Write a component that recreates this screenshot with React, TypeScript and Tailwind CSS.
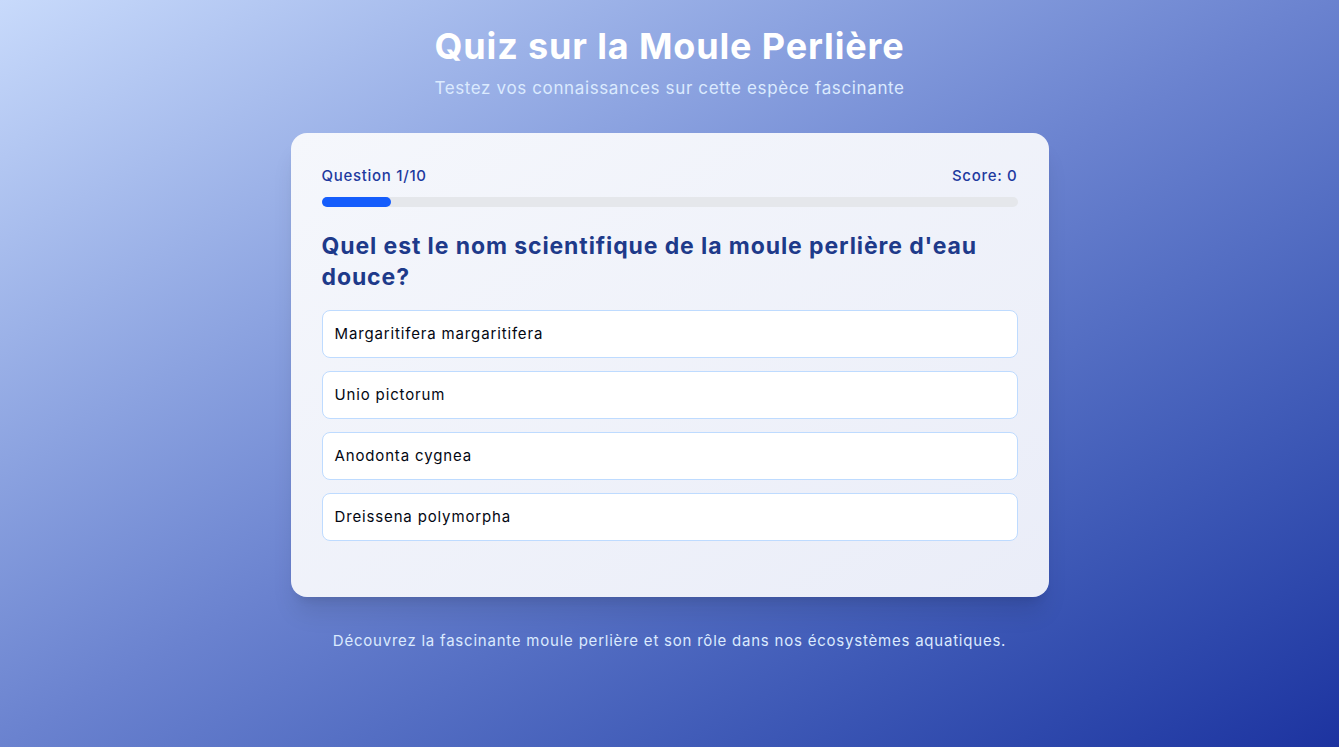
import React, { useState } from "react";

const questions = [
  {
    question: "Quel est le nom scientifique de la moule perlière d'eau douce?",
    options: [
      "Margaritifera margaritifera",
      "Unio pictorum",
      "Anodonta cygnea",
      "Dreissena polymorpha",
    ],
  },
];

const App = () => {
  const [current] = useState(0);
  const [score] = useState(0);
  const total = 10;
  const q = questions[current];

  return (
    <div
      className="min-h-screen w-full bg-gradient-to-br from-[#c8dafb] via-[#6a82cf] to-[#1d33a0] flex flex-col items-center pt-[23px] pb-10"
      style={{ fontFamily: "Inter, 'Noto Sans', sans-serif" }}
    >
      <h1 className="text-[36px] leading-[46px] font-bold text-white tracking-[0.85px]">
        Quiz sur la Moule Perlière
      </h1>
      <p className="mt-[5px] text-[17px] leading-7 text-blue-100 tracking-[0.63px]">
        Testez vos connaissances sur cette espèce fascinante
      </p>

      <div className="mt-[31px] w-[758px] rounded-2xl bg-gradient-to-br from-[#f5f7fc] to-[#eaedf8] shadow-xl px-[31px] pt-[33px] pb-[56px]">
        <div className="flex justify-between items-center text-[15px] leading-5 font-medium text-[#1e3a9f] tracking-[0.7px]">
          <span>Question {current + 1}/{total}</span>
          <span>Score: {score}</span>
        </div>
        <div className="mt-[11px] h-2.5 w-full rounded-full bg-gray-200">
          <div
            className="h-2.5 rounded-full bg-blue-600"
            style={{ width: `${((current + 1) / total) * 100}%` }}
          />
        </div>

        <h2 className="mt-[24px] text-[23px] leading-[31px] font-bold text-[#1e3a8a] tracking-[0.9px]">
          {q.question}
        </h2>

        <div className="mt-[17px] flex flex-col gap-[13px]">
          {q.options.map((option) => (
            <button
              key={option}
              className="w-full text-left rounded-lg border border-blue-200 bg-white px-3 h-[48px] text-[15px] text-gray-950 tracking-[0.85px] hover:bg-blue-50"
            >
              {option}
            </button>
          ))}
        </div>
      </div>

      <p className="mt-[32px] text-[15px] leading-6 text-blue-100 tracking-[0.78px]">
        Découvrez la fascinante moule perlière et son rôle dans nos écosystèmes aquatiques.
      </p>
    </div>
  );
};

export default App;
